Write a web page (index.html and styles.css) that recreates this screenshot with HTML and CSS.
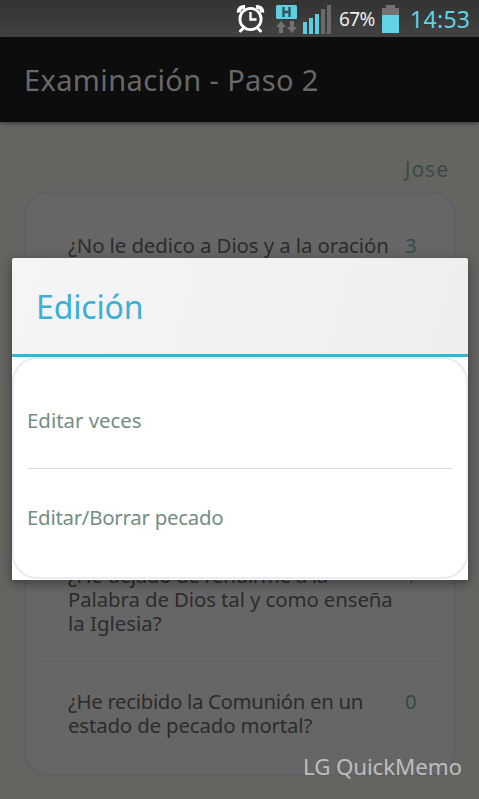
FILE: index.html
```html
<!DOCTYPE html>
<html lang="es">
<head>
<meta charset="utf-8">
<title>Examinación</title>
<link rel="stylesheet" href="styles.css">
</head>
<body>
<div class="status">
  <svg class="alarm" width="30" height="31" viewBox="0 0 30 31" fill="none" stroke="#fff">
    <circle cx="14.500" cy="16" r="10.600" stroke-width="2.800"/>
    <path d="M14.500 9v7.500h6" stroke-width="2.400"/>
    <path d="M2.800 9.500C2.500 5.500 5.500 3.500 9 4M26.200 9.500C26.500 5.500 23.500 3.500 20 4" stroke-width="4"/>
    <path d="M7.500 25l-3 3M21.500 25l3 3" stroke-width="3" stroke-linecap="round"/>
  </svg>
  <svg class="data" width="22" height="30" viewBox="0 0 22 30">
    <rect width="21" height="14" y="1" rx="1.500" fill="#5ecde0"/>
    <path d="M7.500 3v10M13.500 3v10M7.500 8h6" stroke="#30545c" stroke-width="2.400" fill="none"/>
    <path d="M5 17l5 6H7v6H3v-6H0zM16 29l5-6h-3v-6h-4v6h-3z" fill="#727272"/>
  </svg>
  <svg class="signal" width="29" height="29" viewBox="0 0 29 29">
    <path d="M0 17h4v12H0zM6 13h4v16H6zM12 9h4v20h-4z" fill="#5ecde0"/>
    <path d="M18 4h4v25h-4zM24 0h4v29h-4z" fill="#696969"/>
  </svg>
  <span class="percent">67%</span>
  <svg class="battery" width="17" height="28" viewBox="0 0 17 28">
    <path d="M4 0h9v3h4v7H0V3h4z" fill="#737373"/>
    <path d="M0 10h17v18H0z" fill="#62d2e5"/>
  </svg>
  <span class="clock">14:53</span>
</div>
<header class="bar"><h1>Examinación - Paso 2</h1></header>
<main class="page">
  <div class="user"><span>Jose</span></div>
  <section class="card">
    <div class="row first"><p><span class="l1">¿No le dedico a Dios y a la oración</span></p><b>3</b></div>
    <div class="row middle"><p><span class="l2">¿He dejado de rendirme a la</span><span class="l3">Palabra de Dios tal y como enseña</span><span class="l4">la Iglesia?</span></p><b>1</b></div>
    <div class="row last"><p><span class="l5">¿He recibido la Comunión en un</span><span class="l6">estado de pecado mortal?</span></p><b>0</b></div>
  </section>
</main>
<div class="dialog">
  <h2><span>Edición</span></h2>
  <div class="menu">
    <div class="option"><span class="o1">Editar veces</span></div>
    <div class="option"><span class="o2">Editar/Borrar pecado</span></div>
  </div>
</div>
<div class="memo">LG QuickMemo</div>
</body>
</html>
```

FILE: styles.css
```css
* { box-sizing: border-box; }
body { margin: 0; width: 479px; height: 799px; position: relative; overflow: hidden; display: flex; flex-direction: column; background: #646461; font-family: "Noto Sans", sans-serif; }
h1, h2, p { margin: 0; font-weight: 400; }
.status { height: 38px; flex: none; display: flex; align-items: flex-start; padding-left: 236px; border-bottom: 1px solid #050505; background: linear-gradient(#333, #424242); white-space: nowrap; }
.alarm { margin-top: 3px; }
.data { margin: 4px 0 0 10px; }
.signal { margin: 5px 0 0 5px; }
.percent { width: 36px; margin: 5px 0 0 7px; color: #eee; font-size: 19px; line-height: 28px; letter-spacing: -.6px; }
.battery { margin: 5px 0 0 7px; }
.clock { margin: 4px 0 0 11px; color: #62d2e5; font-size: 23px; line-height: 31px; letter-spacing: .3px; }
.bar { height: 84px; flex: none; padding: 0 24px; background: #0d0d0d; box-shadow: 0 1px 4px #333; }
.bar h1 { color: #686868; font-size: 29px; line-height: 84px; letter-spacing: .38px; white-space: nowrap; }
.page { flex: 1; padding: 33px 23px 23px 24px; display: flex; flex-direction: column; }
.user { height: 36px; padding-right: 7px; text-align: right; color: #3a4a45; font-size: 21px; line-height: 29px; letter-spacing: 1px; }
.card { flex: 1; border: 2px solid #5f5f68; border-radius: 25px; background: #666; padding: 0 14px; display: flex; flex-direction: column; }
.row { display: flex; padding-left: 28px; color: #2c2c2c; font-size: 20.4px; line-height: 24px; }
.row p { width: 337px; white-space: nowrap; }
.row p span { display: block; }
.row b { font-weight: 400; color: #344a49; }
.l1 { letter-spacing: -.09px; }
.l2 { letter-spacing: -.33px; }
.l3 { letter-spacing: -.1px; }
.l5 { letter-spacing: -.33px; }
.l6 { letter-spacing: -.15px; }
.first { padding-top: 40px; }
.middle { margin-top: auto; padding-bottom: 26px; border-bottom: 1px solid #5d5d5d; }
.last { height: 112px; padding-top: 27px; }
.dialog { position: absolute; left: 12px; top: 258px; width: 456px; height: 322px; background: #fff; border-radius: 3px 3px 0 0; box-shadow: 0 3px 12px rgba(0,0,0,.4); display: flex; flex-direction: column; }
.dialog h2 { height: 99px; flex: none; padding-left: 24px; border-bottom: 3px solid #43afd2; border-radius: 3px 3px 0 0; background: linear-gradient(105deg, #f5f5f5, #eee); color: #3bafd6; font-size: 32px; line-height: 98px; letter-spacing: -.15px; }
.menu { height: 222px; border: 2px solid #ebebf3; border-radius: 25px; padding: 13px; }
.option { height: 96px; color: #748e85; font-size: 20.4px; line-height: 97px; white-space: nowrap; }
.option:first-child { height: 97px; border-bottom: 1px solid #dedede; }
.o2 { letter-spacing: -.25px; }
.memo { position: absolute; left: 303px; top: 752px; color: #bdbdbd; font-size: 22.4px; line-height: 30px; letter-spacing: -.15px; white-space: nowrap; }
```
